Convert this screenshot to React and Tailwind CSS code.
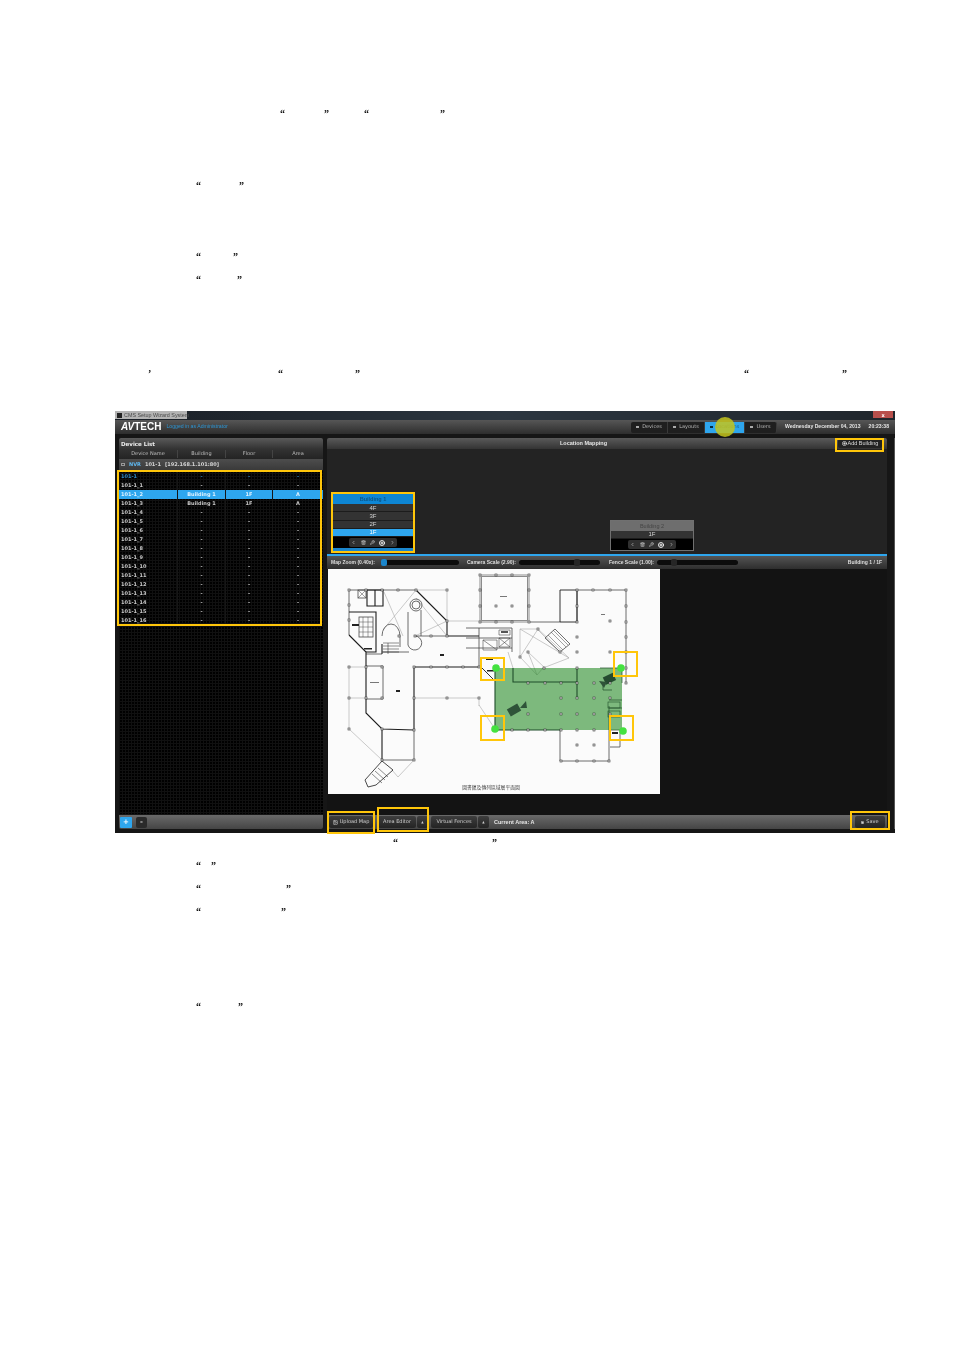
import React from "react";
import { ChevronLeft, ChevronRight, Trash2, Wrench, CirclePlus, Image, Square } from "lucide-react";

const rows = ["101-1","101-1_1","101-1_2","101-1_3","101-1_4","101-1_5","101-1_6","101-1_7","101-1_8","101-1_9","101-1_10","101-1_11","101-1_12","101-1_13","101-1_14","101-1_15","101-1_16"];

function Q({ c, className = "" }) {
  return <span className={"block w-[4px] shrink-0 " + className}>{c}</span>;
}

function QLine({ className = "", children }) {
  return <div className={"flex h-[8px] text-[10px] leading-[8px] font-bold text-black opacity-95 font-['Liberation_Serif',serif] " + className}>{children}</div>;
}

function Tab({ label, active }) {
  return (
    <div className={"flex h-full items-center justify-center gap-[3px] border-r border-[#3a3a3a] " + (active ? "w-[40px] bg-[#2ea6ee] text-[#135f8c]" : "bg-[#1f1f1f] text-[#b9b9b9] " + (label === "Users" ? "w-[32px] rounded-r-[2px]" : label === "Devices" ? "w-[37px] rounded-l-[2px]" : "w-[37px]"))}>
      <span className={"h-[2px] w-[3px] " + (active ? "bg-[#0b2a3f]" : "bg-[#aaaaaa]")} />
      <span>{label}</span>
    </div>
  );
}

function Controls() {
  return (
    <div className="flex h-[11px] items-center justify-center bg-black">
      <div className="flex h-[9px] w-[48px] items-center justify-around rounded-[2px] bg-[#303030] text-[#c4c4c4]">
        <ChevronLeft size={5} strokeWidth={3} />
        <Trash2 size={5} strokeWidth={3} />
        <Wrench size={5} strokeWidth={3} />
        <CirclePlus size={6} strokeWidth={3.5} className="text-white" />
        <ChevronRight size={5} strokeWidth={3} />
      </div>
    </div>
  );
}

function Floor({ label, active }) {
  return (
    <div className={"flex h-[8.25px] items-center justify-center border-b border-[#1c1c1c] text-[6px] leading-none " + (active ? "bg-[#2ea6ee] text-white" : "bg-[#333333] text-[#d5d5d5]")}>{label}</div>
  );
}

function Slider({ className, thumb, blue }) {
  return (
    <div className={"relative h-[5px] rounded-full bg-[#0c0c0c] " + className}>
      <span className={"absolute top-[-1px] h-[7px] w-[6px] rounded-[2px] " + thumb + " " + (blue ? "bg-[#1b86cc]" : "bg-[#262626]")} />
    </div>
  );
}

function Btn({ className = "", children }) {
  return <div className={"flex h-[12px] items-center justify-center gap-[2px] rounded-[2px] bg-linear-to-b from-[#3e3e3e] to-[#242424] text-[5px] text-[#d0d0d0] " + className}>{children}</div>;
}

function Arrow() {
  return <span className="text-[3px] leading-none">▲</span>;
}

function Mark({ className }) {
  return <div className={"absolute border-[2px] border-[#ffc60a] " + className} />;
}

const dark = "#1c1c1c";
const mid = "#4a4a4a";
const thin = "#a8a8a8";

const cols = [
  [349,590],[366,590],[382,590],[398,590],[416,590],[447,590],[349,605],[349,620],[447,621],[447,636],[431,636],[415,636],[399,636],
  [414,667],[431,667],[447,667],[463,667],[479,667],[349,667],[366,667],[382,667],[349,698],[366,698],[382,698],[414,698],[447,698],[479,698],
  [349,729],[382,729],[414,730],[414,760],[382,760],
  [480,575],[496,575],[512,575],[529,575],[480,590],[529,590],[480,606],[529,606],[480,622],[496,622],[512,622],[529,622],[496,606],[512,606],
  [577,590],[593,590],[610,590],[626,590],[626,606],[626,622],[626,637],[626,652],[626,668],[626,683],[577,606],[577,622],[577,637],[577,652],[577,668],[610,621],[610,652],
  [528,683],[545,683],[561,683],[577,683],[594,683],[610,683],
  [561,698],[577,698],[594,698],[610,698],
  [528,714],[561,714],[577,714],[594,714],[610,714],
  [512,730],[528,730],[545,730],[561,730],[577,730],[594,730],
  [577,745],[594,745],[561,761],[577,761],[594,761],[609,761],[528,652],[544,668],[520,657],[538,629],[560,652],
];

function FloorPlan() {
  return (
    <svg viewBox="328 569 332 225" className="block h-[225px] w-[332px]" fill="none" strokeLinejoin="miter">
      <rect x="328" y="569" width="332" height="225" fill="#fbfbfb" />
      <g stroke={thin} strokeWidth="0.6">
        <path d="M416 590H447V621M384 592L403 636M383 630L416 590M447 621L415 636M416 598L447 636M447 621H479" />
        <path d="M349 667V729L382 760M349 667H366M349 698H366M414 698H479M479 698V706M479 705L495 729" />
        <path d="M414 760L398 777L392 770M520 629H538L569 658L543 668L537 675L520 657ZM520 629L569 658M538 629L520 657M528 652L545 668M538 630L560 652M528 652L537 675M508 652L513 668" />
      </g>
      <g stroke={mid} strokeWidth="0.8">
        <path d="M349 590V635M560 622H529M577 622V590H626V683M349 590H416" />
        <path d="M447 636H415M479 628V667M466 628H512M466 638H512M466 648H512M512 628V652" />
        <path d="M382 760H414V730M409 652H382M366 654H382" />
        <circle cx="416" cy="605" r="6" />
        <circle cx="416" cy="605" r="4" />
        <path d="M408 612V645A7 7 0 1 0 415 636" />
        <path d="M421 610V636" />
        <path d="M382 636A9 12 0 0 1 400 636V647" />
        <path d="M366 666H383V699H366" />
        <rect x="359" y="617" width="14" height="20" />
        <path d="M363 617V637M368 617V637M359 622H373M359 627H373M359 632H373" strokeWidth="0.5" />
        <rect x="358" y="590" width="8" height="8" />
        <path d="M358 590L366 598M366 590L358 598" strokeWidth="0.5" />
        <path d="M545 638L555 629L570 644L560 652Z" />
        <path d="M548 635L563 650M551 632L566 647M553 630L568 645" strokeWidth="0.5" />
        <path d="M483 640H497V650H483ZM499 638H510V647H499ZM499 638L510 647M510 638L499 647M483 640L497 650M499 630H510V635H499Z" strokeWidth="0.6" />
        <path d="M560 730V761H609V730M610 730H620V747H610" />
      </g>
      <g stroke={dark} strokeWidth="1.1">
        <path d="M416 590L447 621V636M349 635L366 652V713L382 729L414 730V667H479" />
        <path d="M349 612H376V652H366M367 590H383V606H367ZM375 590V606" />
        <path d="M480 575H529V622H480ZM481.5 576.5H527.5V620.5H481.5Z" strokeWidth="0.5" />
        <path d="M560 590H577V622H560Z" strokeWidth="0.9" />
        <path d="M382 729V760M382 644V654M447 636H479" />
        <path d="M382 761L393 770L376 785L368 787L365 780Z" strokeWidth="0.8" />
        <path d="M372 774L382 783M375 771L385 780M378 768L388 777" strokeWidth="0.5" />
        <path d="M383 643H399M383 646H399M383 649H399M383 652H399M388 643V654" strokeWidth="0.5" />
        <path d="M482 668L494 680H482" strokeWidth="0.9" />
      </g>
      <rect x="495" y="668" width="127" height="62" fill="#2f8f2f" fillOpacity="0.62" />
      <g stroke="#1f4d2a" strokeWidth="0.9">
        <path d="M495 668V730H560M513 668V682H577M577 668V698" strokeWidth="1.1" />
        <path d="M600 668H622V683M609 700H622M609 708H622M609 706V716H622M609 716V730M603 682V690H612" strokeWidth="0.7" />
      </g>
      <rect x="608" y="702" width="12" height="6" fill="none" stroke="#1f4d2a" strokeWidth="0.6" />
      <rect x="608" y="711" width="12" height="6" fill="none" stroke="#1f4d2a" strokeWidth="0.6" />
      <g fill="#2f5339">
        <rect x="508" y="706" width="12" height="8" transform="rotate(-30 514 710)" />
        <path d="M520 708L526 701L527 708Z" />
        <rect x="604" y="675" width="11" height="8" transform="rotate(-25 609 679)" fill="#254a30" />
        <path d="M599 681L607 682L604 688Z" />
      </g>
      <g fill="#fbfbfb" stroke="#333" strokeWidth="0.6">
        {cols.map(([x, y], i) => <rect key={i} x={x - 1} y={y - 1} width="2" height="2" />)}
      </g>
      <g fill="#222">
        <rect x="352" y="624" width="7" height="2" />
        <rect x="364" y="648" width="8" height="1.5" />
        <rect x="440" y="654" width="4" height="2" />
        <rect x="396" y="690" width="4" height="2" />
        <rect x="370" y="682" width="9" height="1" fill="#777" />
        <rect x="500" y="596" width="7" height="1" fill="#777" />
        <rect x="601" y="614" width="4" height="1" fill="#777" />
        <rect x="486" y="658" width="7" height="2" />
        <rect x="487" y="670" width="7" height="1.5" />
        <rect x="501" y="631" width="7" height="2" fill="#555" />
        <rect x="612" y="732" width="6" height="2" />
      </g>
      <g fill="#44e23f">
        <circle cx="496" cy="668" r="3.8" />
        <circle cx="495" cy="729" r="3.8" />
        <circle cx="621" cy="668" r="3.8" />
        <circle cx="623" cy="731" r="3.8" />
      </g>
      <text x="491" y="789" textAnchor="middle" fontSize="4.8" fill="#444" className="font-['Noto_Sans_CJK_TC',sans-serif]">圖書館及傳列區域層平面圖</text>
    </svg>
  );
}

const sep = "border-r border-[#161616]";

export default function App() {
  return (
    <div className="h-[1352px] w-[954px] overflow-hidden bg-white pt-[110px]">
      <QLine><Q c="“" className="ml-[280px]" /><Q c="”" className="ml-[40px]" /><Q c="“" className="ml-[36px]" /><Q c="”" className="ml-[72px]" /></QLine>
      <QLine className="mt-[64px]"><Q c="“" className="ml-[196px]" /><Q c="”" className="ml-[39px]" /></QLine>
      <QLine className="mt-[63px]"><Q c="“" className="ml-[196px]" /><Q c="”" className="ml-[33px]" /></QLine>
      <QLine className="mt-[15px]"><Q c="“" className="ml-[196px]" /><Q c="”" className="ml-[37px]" /></QLine>
      <QLine className="mt-[86px]"><Q c="’" className="ml-[148px]" /><Q c="“" className="ml-[126px]" /><Q c="”" className="ml-[73px]" /><Q c="“" className="ml-[385px]" /><Q c="”" className="ml-[94px]" /></QLine>

      <div className="relative mt-[33px] ml-[115px] flex h-[422px] w-[780px] flex-col bg-[#161616] font-['DejaVu_Sans',sans-serif] blur-[0.45px]">
        <div className="flex h-[9px] items-start bg-linear-to-r from-[#1a1f26] via-[#2c3640] to-[#20262c] text-[5px] leading-[8px] text-[#9a9a9a]">
          <div className="flex h-[8px] w-[72px] items-center gap-[2px] bg-[#b4b4b4] pl-[2px] font-['Liberation_Sans',sans-serif] text-[#4a4a4a]">
            <span className="h-[5px] w-[5px] shrink-0 bg-[#222222]" />
            <span className="text-[5.4px] whitespace-nowrap">CMS Setup Wizard System</span>
          </div>
          <div className="ml-auto mr-[2px] flex h-[7px] w-[20px] items-center justify-center bg-[#b8504c] font-bold text-white">x</div>
        </div>
        <div className="flex h-[14px] items-center bg-linear-to-b from-[#565656] to-[#2e2e2e] pl-[6px]">
          <div className="font-['Liberation_Sans',sans-serif] text-[10px] leading-none font-bold text-white"><span className="italic">AV</span>TECH</div>
          <div className="ml-[5px] font-['Liberation_Sans',sans-serif] text-[5.2px] text-[#2c94d2]">Logged in as Administrator</div>
          <div className="ml-auto flex h-[11px] items-center text-[5px]">
            <Tab label="Devices" />
            <Tab label="Layouts" />
            <Tab label="Locations" active />
            <Tab label="Users" />
          </div>
          <div className="ml-[8px] mr-[6px] flex w-[104px] justify-between font-['Liberation_Sans',sans-serif] text-[5.1px] font-bold text-[#e4e4e4]">
            <span>Wednesday December 04, 2013</span>
            <span>20:23:38</span>
          </div>
        </div>

        <div className="flex flex-1 gap-[4px] py-[4px] pl-[4px]">
          <div className="flex w-[204px] flex-col">
            <div className="flex h-[11px] items-center rounded-t-[2px] bg-linear-to-b from-[#5a5a5a] to-[#333333] pl-[2px] pt-[1px] text-[5.5px] font-bold text-[#eeeeee]">Device List</div>
            <div className="grid h-[10px] grid-cols-[59px_48px_47px_50px] items-center bg-linear-to-b from-[#333333] to-[#242424] text-center text-[5px] text-[#bdbdbd]">
              <span className="border-r border-[#444444]">Device Name</span>
              <span className="border-r border-[#444444]">Building</span>
              <span className="border-r border-[#444444]">Floor</span>
              <span>Area</span>
            </div>
            <div className="flex h-[11px] items-center gap-[4px] bg-linear-to-b from-[#4d4d4d] to-[#3a3a3a] pl-[2px] text-[5px] font-bold text-[#d4d4d4]">
              <span className="h-[3px] w-[4px] border border-[#999999]" />
              <span className="text-[#5fb8f0]">NVR</span>
              <span>101-1</span>
              <span>[192.168.1.101:80]</span>
            </div>
            <div className="flex flex-1 flex-col bg-black bg-[linear-gradient(#101010_1px,transparent_1px),linear-gradient(90deg,#101010_1px,transparent_1px)] bg-size-[3px_3px]">
              <div className="h-[2px]" />
              {rows.map((r, i) => {
                const sel = i === 2;
                const bld = i === 2 || i === 3;
                return (
                  <div key={r} className={"grid h-[9px] grid-cols-[59px_48px_47px_50px] items-center text-center text-[5px] font-bold leading-[9px] " + (sel ? "bg-[#2ea6ee] text-[#dff2ff]" : i === 0 ? "text-[#2a86c4]" : "text-[#c8c8c8]")}>
                    <span className={"pl-[2px] text-left " + sep}>{r}</span>
                    <span className={sep}>{bld ? "Building 1" : "-"}</span>
                    <span className={sep}>{bld ? "1F" : "-"}</span>
                    <span>{bld ? "A" : "-"}</span>
                  </div>
                );
              })}
              <div className="flex-1" />
            </div>
            <div className="mt-[1px] flex h-[14px] items-center gap-[4px] rounded-b-[2px] bg-linear-to-b from-[#6a6a6a] to-[#454545] pl-[1px]">
              <div className="flex h-[11px] w-[12px] items-center justify-center rounded-[1px] bg-[#2ea6ee] text-[7px] leading-none font-bold text-white">+</div>
              <div className="flex h-[11px] w-[11px] items-center justify-center rounded-[2px] bg-[#2a2a2a] text-[7px] leading-none font-bold text-[#cccccc]">-</div>
            </div>
          </div>

          <div className="flex w-[560px] flex-col">
            <div className="relative flex h-[11px] items-center rounded-t-[2px] bg-linear-to-b from-[#5a5a5a] to-[#343434] pl-[233px] font-['Liberation_Sans',sans-serif] text-[5.5px] font-bold text-[#e6e6e6]">
              Location Mapping
              <div className="absolute right-[5px] top-[1px] flex h-[9px] w-[44px] items-center justify-center gap-[1px] rounded-[2px] bg-[#222222] font-normal text-[#dddddd]">
                <CirclePlus size={5} strokeWidth={3.5} />
                <span>Add Building</span>
              </div>
            </div>
            <div className="flex h-[105px] items-end bg-[#232323] pb-[3px] font-['Liberation_Sans',sans-serif]">
              <div className="ml-[6px] flex h-[57px] w-[80px] flex-col">
                <div className="flex h-[10px] items-center justify-center bg-[#0e86d4] text-[5.5px] font-bold text-[#0b5688]">Building 1</div>
                <Floor label="4F" />
                <Floor label="3F" />
                <Floor label="2F" />
                <Floor label="1F" active />
                <Controls />
                <div className="flex-1 bg-[#1b86cc]" />
              </div>
              <div className="ml-[197px] flex w-[84px] flex-col border border-[#707070] bg-black">
                <div className="flex h-[10px] items-center justify-center bg-[#6e6e6e] text-[5.5px] text-[#444444]">Building 2</div>
                <Floor label="1F" />
                <Controls />
              </div>
            </div>
            <div className="h-[2px] bg-[#2ea6ee]" />
            <div className="flex h-[13px] items-center bg-linear-to-b from-[#555555] to-[#2e2e2e] font-['Liberation_Sans',sans-serif] text-[5px] font-bold text-[#dddddd]">
              <span className="ml-[4px] w-[50px] whitespace-nowrap">Map Zoom (0.40x):</span>
              <Slider className="w-[78px]" thumb="left-0" blue />
              <span className="ml-[8px] w-[52px] whitespace-nowrap">Camera Scale (2.90):</span>
              <Slider className="w-[81px]" thumb="left-[55px]" />
              <span className="ml-[9px] w-[48px] whitespace-nowrap">Fence Scale (1.00):</span>
              <Slider className="w-[81px]" thumb="left-[14px]" />
              <span className="ml-auto mr-[5px]">Building 1 / 1F</span>
            </div>
            <div className="flex-1 bg-[#131313] pl-[1px]">
              <FloorPlan />
            </div>
            <div className="flex h-[14px] items-center rounded-b-[2px] bg-linear-to-b from-[#6a6a6a] to-[#454545]">
              <Btn className="ml-[2px] w-[44px]">
                <Image size={5} strokeWidth={2.5} />
                <span>Upload Map</span>
              </Btn>
              <Btn className="ml-[5px] w-[38px]">Area Editor</Btn>
              <Btn className="ml-[1px] w-[11px]"><Arrow /></Btn>
              <Btn className="ml-[3px] w-[46px]">Virtual Fences</Btn>
              <Btn className="ml-[1px] w-[11px]"><Arrow /></Btn>
              <span className="ml-[5px] font-['Liberation_Sans',sans-serif] text-[5.5px] font-bold text-[#e4e4e4]">Current Area: A</span>
              <Btn className="ml-auto mr-[2px] w-[30px]">
                <Square size={3} fill="currentColor" />
                <span>Save</span>
              </Btn>
            </div>
          </div>
          <div className="ml-auto w-[1px] bg-[#555555]" />
        </div>

        <div className="absolute left-[600px] top-[6px] h-[20px] w-[20px] rounded-full bg-[#c4c41c] opacity-85" />
        <Mark className="left-[2px] top-[59px] h-[156px] w-[205px]" />
        <Mark className="left-[216px] top-[81px] h-[61px] w-[84px]" />
        <Mark className="left-[720px] top-[27px] h-[14px] w-[49px]" />
        <Mark className="left-[212px] top-[400px] h-[23px] w-[48px]" />
        <Mark className="left-[262px] top-[396px] h-[25px] w-[52px]" />
        <Mark className="left-[735px] top-[400px] h-[19px] w-[40px]" />
        <Mark className="left-[365px] top-[246px] h-[24px] w-[25px]" />
        <Mark className="left-[365px] top-[304px] h-[26px] w-[25px]" />
        <Mark className="left-[498px] top-[240px] h-[26px] w-[25px]" />
        <Mark className="left-[494px] top-[304px] h-[26px] w-[25px]" />
      </div>

      <QLine className="mt-[6px]"><Q c="“" className="ml-[393px]" /><Q c="”" className="ml-[95px]" /></QLine>
      <QLine className="mt-[15px]"><Q c="“" className="ml-[196px]" /><Q c="”" className="ml-[11px]" /></QLine>
      <QLine className="mt-[15px]"><Q c="“" className="ml-[196px]" /><Q c="”" className="ml-[86px]" /></QLine>
      <QLine className="mt-[15px]"><Q c="“" className="ml-[196px]" /><Q c="”" className="ml-[81px]" /></QLine>
      <QLine className="mt-[87px]"><Q c="“" className="ml-[196px]" /><Q c="”" className="ml-[38px]" /></QLine>
    </div>
  );
}
